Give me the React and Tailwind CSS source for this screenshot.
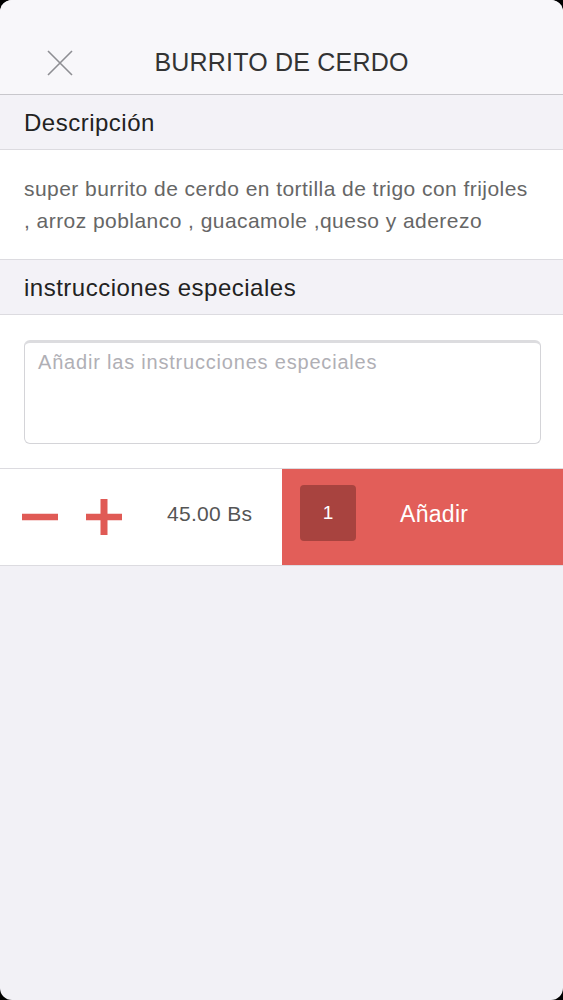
export default function App() {
  return (
    <div className="min-h-[1000px] bg-black" style={{ fontFamily: '"Liberation Sans", Arial, sans-serif' }}>
      <div className="min-h-[1000px] rounded-[12px] overflow-hidden bg-[#f2f1f6] flex flex-col">
        <div className="h-[95px] bg-[#f8f7fa] border-b border-[#c8c7cc] relative flex items-end justify-center pb-[19px]">
          <button className="absolute left-[47px] top-[50px] w-[26px] h-[26px] text-[#8e8e93]">
            <svg viewBox="0 0 26 26" className="w-full h-full" fill="none" stroke="currentColor" strokeWidth="1.6">
              <path d="M1 1 L25 25 M25 1 L1 25" />
            </svg>
          </button>
          <h1 className="text-[25px] text-[#333] leading-none tracking-[0.2px]">BURRITO DE CERDO</h1>
        </div>

        <div className="h-[55px] bg-[#f3f2f7] border-b border-[#dcdbe0] flex items-center px-[24px] pt-[2px]">
          <span className="text-[24px] tracking-[0.5px] text-[#222]">Descripción</span>
        </div>
        <div className="h-[110px] bg-white border-b border-[#dcdbe0] px-[24px] pt-[23px]">
          <p className="text-[21px] leading-[31.5px] tracking-[0.45px] text-[#666]">
            super burrito de cerdo en tortilla de trigo con frijoles , arroz poblanco , guacamole ,queso y aderezo
          </p>
        </div>

        <div className="h-[55px] bg-[#f3f2f7] border-b border-[#dcdbe0] flex items-center px-[24px] pt-[2px]">
          <span className="text-[24px] tracking-[0.5px] text-[#222]">instrucciones especiales</span>
        </div>
        <div className="h-[154px] bg-white border-b border-[#dcdbe0] pl-[24px] pr-[22px] pt-[25px]">
          <textarea
            placeholder="Añadir las instrucciones especiales"
            className="w-full h-[104px] rounded-[6px] border border-[#d4d4d8] border-t-[3px] border-t-[#dcdcdf] px-[13px] pt-[4px] text-[20px] tracking-[0.8px] text-[#333] placeholder:text-[#b0afb5] resize-none outline-none bg-white"
          />
        </div>

        <div className="h-[97px] flex border-b border-[#dcdbe0]">
          <div className="w-[282px] bg-white flex items-center pb-[7px]">
            <button className="ml-[22px] mt-[6px] w-[36px] h-[36px] flex items-center justify-center">
              <svg viewBox="0 0 36 36" className="w-full h-full">
                <rect x="0" y="14.75" width="36" height="6.5" fill="#e05a55" />
              </svg>
            </button>
            <button className="ml-[28px] mt-[6px] w-[36px] h-[36px] flex items-center justify-center">
              <svg viewBox="0 0 36 36" className="w-full h-full">
                <rect x="0" y="14.75" width="36" height="6.5" fill="#e05a55" />
                <rect x="14.5" y="0" width="7" height="36" fill="#e05a55" />
              </svg>
            </button>
            <span className="ml-[45px] text-[21px] tracking-[0.3px] text-[#555]">45.00 Bs</span>
          </div>
          <button className="flex-1 bg-[#e25e59] flex items-center pl-[18px] pb-[8px]">
            <span className="w-[56px] h-[56px] rounded-[4px] bg-[#a8433f] text-white text-[19px] flex items-center justify-center">1</span>
            <span className="ml-[44px] mt-[3px] text-[23px] tracking-[0.3px] text-white">Añadir</span>
          </button>
        </div>
      </div>
    </div>
  )
}
